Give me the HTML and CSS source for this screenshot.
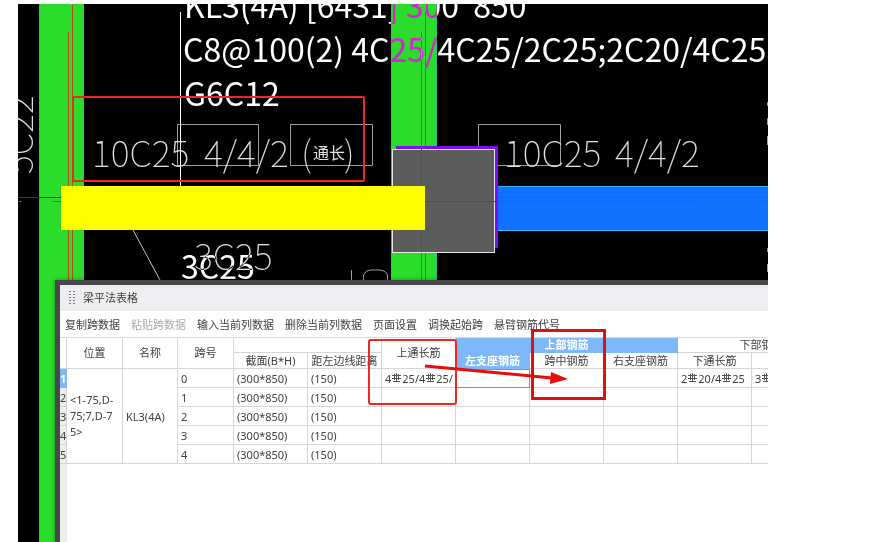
FILE: index.html
```html
<!DOCTYPE html>
<html lang="zh-CN">
<head>
    <meta charset="UTF-8">
    <meta name="viewport" content="width=device-width, initial-scale=1.0">
    <title>梁平法表格</title>
    <link rel="stylesheet" href="styles.css">
</head>
<body>
    <main class="viewport">
        <!-- Beam drawing -->
        <svg class="drawing" aria-label="KL3(4A)">
            <g transform="translate(-18 -4)">
                <!-- Vertical beams -->
                <rect class="beam-green" x="39" y="0" width="45" height="2000"/>
                <rect class="beam-green" x="392" y="0" width="44" height="2000"/>
                <path class="edge-cyan" d="M39.5 0V2000M83.5 0V2000M391.5 0V2000M436.5 0V2000"/>
                <path class="axis" d="M68.5 32V2000M72.5 4V2000M421.5 32V2000M425.5 4V2000"/>
                <path class="axis-green" d="M18 197.5H61"/>
                <path class="axis" d="M19 201.5H22M52 201.5H61"/>

                <!-- Label frames and leaders -->
                <path class="frame" d="M177.500 124.500H258.500V165.500H177.500ZM290.500 124.500H372.500V165.500H290.500ZM478.500 124.500H560.500V165.500H478.500Z"/>
                <path class="leader" d="M180.500 12V186"/>
                <path class="leader-thin" d="M133 230L160 280"/>

                <!-- Horizontal beams and column -->
                <rect class="beam-blue" x="498" y="186" width="2000" height="45"/>
                <path class="edge-light" d="M498 186.500H2500M498 230.500H2500"/>
                <path class="axis-blue" d="M498 197.500H2500M498 201.500H700M729 201.500H732M762 201.500H768"/>
                <rect class="column-shade" x="396" y="146" width="102" height="102"/>
                <rect class="column" x="392.5" y="149.5" width="102" height="103"/>
                <path class="axis-red" d="M421.500 146V252M425.500 146V149M425 201.500H495"/>
                <rect class="beam-yellow" x="61" y="186" width="364" height="44"/>

                <!-- Plotter labels -->
                <g class="plot">
                    <text x="92" y="167">10C25</text>
                    <text x="204" y="167">4/4/2</text>
                    <text x="301" y="167">(</text>
                    <text class="plot-small" x="313" y="159">通长</text>
                    <text x="344" y="167">)</text>
                    <text x="504" y="167">10C25</text>
                    <text x="615" y="167">4/4/2</text>
                    <text x="194" y="270">3C25</text>
                    <text transform="translate(33 174) rotate(-90)">5C22</text>
                </g>
                <path class="frame" d="M351.500 270V280M363.500 280V275Q366 270 370 270H380Q387 271 387.500 276V280"/>
                <path class="frame" d="M767.500 102V106M767.500 118V125M767.500 136V145M767.500 248V252M767.500 264V272"/>

                <!-- Beam notes -->
                <g class="note">
                    <text x="184" y="18">KL3(4A) [6431] 300  850</text>
                    <text x="183" y="62">C8@100(2) 4C25/4C25/2C25;2C20/4C25</text>
                    <text x="184" y="106">G6C12</text>
                    <text x="181" y="279">3C25</text>
                </g>
            </g>
        </svg>

        <!-- Table panel -->
        <section class="panel">
            <header class="panel-title">
                <svg class="grip" width="6" height="14" viewBox="0 0 6 14">
                    <path d="M1 0V14M5 0V14"/>
                </svg>
                <span>梁平法表格</span>
            </header>
            <div class="toolbar">
                <button type="button">复制跨数据</button>
                <button type="button" disabled>粘贴跨数据</button>
                <button type="button">输入当前列数据</button>
                <button type="button">删除当前列数据</button>
                <button type="button">页面设置</button>
                <button type="button">调换起始跨</button>
                <button type="button">悬臂钢筋代号</button>
            </div>
            <div class="sheet">
                <svg class="symbols">
                    <symbol id="rebar" viewBox="0 0 9 9">
                        <path d="M4.500 0V8.500M1 8.500H8M0 2.500H9M0 5.500H9M2.500 1V7M6.500 1V7"/>
                    </symbol>
                </svg>
                <table>
                    <colgroup>
                        <col class="c-num"><col class="c-info"><col class="c-span"><col class="c-info">
                        <col class="c-data"><col class="c-data"><col class="c-data"><col class="c-data">
                        <col class="c-data"><col class="c-data"><col class="c-data"><col class="c-wide">
                    </colgroup>
                    <thead>
                        <tr class="head-top">
                            <td rowspan="2"></td>
                            <th rowspan="2">位置</th>
                            <th rowspan="2">名称</th>
                            <th rowspan="2">跨号</th>
                            <th colspan="2"></th>
                            <th rowspan="2">上通长筋</th>
                            <th colspan="3" class="active">上部钢筋</th>
                            <th colspan="2">下部钢筋</th>
                        </tr>
                        <tr class="head-sub">
                            <th>截面(B*H)</th>
                            <th>距左边线距离</th>
                            <th class="active">左支座钢筋</th>
                            <th>跨中钢筋</th>
                            <th>右支座钢筋</th>
                            <th>下通长筋</th>
                            <th></th>
                        </tr>
                    </thead>
                    <tbody>
                        <tr>
                            <td class="num active">1</td>
                            <td rowspan="5" class="place">&lt;1-75,D-<br>75;7,D-7<br>5&gt;</td>
                            <td rowspan="5">KL3(4A)</td>
                            <td>0</td><td>(300*850)</td><td>(150)</td>
                            <td>4<svg class="rebar"><use href="#rebar"/></svg>25/4<svg class="rebar"><use href="#rebar"/></svg>25/</td>
                            <td class="selected"></td><td></td><td></td>
                            <td>2<svg class="rebar"><use href="#rebar"/></svg>20/4<svg class="rebar"><use href="#rebar"/></svg>25</td>
                            <td>3<svg class="rebar"><use href="#rebar"/></svg></td>
                        </tr>
                        <tr>
                            <td class="num">2</td>
                            <td>1</td><td>(300*850)</td><td>(150)</td>
                            <td></td><td></td><td></td><td></td><td></td><td></td>
                        </tr>
                        <tr>
                            <td class="num">3</td>
                            <td>2</td><td>(300*850)</td><td>(150)</td>
                            <td></td><td></td><td></td><td></td><td></td><td></td>
                        </tr>
                        <tr>
                            <td class="num">4</td>
                            <td>3</td><td>(300*850)</td><td>(150)</td>
                            <td></td><td></td><td></td><td></td><td></td><td></td>
                        </tr>
                        <tr>
                            <td class="num">5</td>
                            <td>4</td><td>(300*850)</td><td>(150)</td>
                            <td></td><td></td><td></td><td></td><td></td><td></td>
                        </tr>
                    </tbody>
                </table>
            </div>
        </section>

        <!-- Red markup over everything -->
        <svg class="markup">
            <g transform="translate(-18 -4)">
                <rect class="mark" x="73" y="97" width="291" height="84" rx="1"/>
                <rect class="mark" x="369" y="340" width="87" height="64" rx="2"/>
                <rect class="mark-strong" x="532.5" y="330.5" width="72" height="68"/>
                <path class="arrow-line" d="M425 366L552 378"/>
                <path class="arrow-head" d="M551 372L568 379L550 384Z"/>
            </g>
        </svg>
    </main>
</body>
</html>
```
FILE: styles.css
```css
body {
    margin: 0;
    background-color: #fff;
    font-family: "Noto Sans", "Noto Sans CJK SC", sans-serif;
}

.viewport {
    position: relative;
    display: flex;
    flex-direction: column;
    box-sizing: border-box;
    min-height: calc(100vh - 4px);
    margin: 4px 118px 0 18px;
    padding: 276px 0 0 37px;
    background-color: #000;
    overflow: hidden;
}

/* Drawing */
.drawing,
.markup {
    position: absolute;
    top: 0;
    left: 0;
    width: 100%;
    height: 100%;
    fill: none;
}

.markup {
    pointer-events: none;
}

.beam-green {
    fill: #2bdc2b;
}

.beam-blue {
    fill: #1070ff;
}

.beam-yellow {
    fill: #ffff00;
}

.column {
    fill: #5c5c5c;
    stroke: #e6e6e6;
}

.column-shade {
    fill: #7a0ff5;
}

.edge-cyan {
    stroke: #1fc08c;
}

.edge-light {
    stroke: #35b5f5;
}

.axis {
    stroke: #b84a14;
}

.axis-green {
    stroke: #0c5a10;
}

.axis-blue {
    stroke: #7a3fae;
}

.axis-red {
    stroke: #e0141c;
}

.frame {
    stroke: #a0a0a0;
}

.leader {
    stroke: #fff;
}

.leader-thin {
    stroke: #c8c8c8;
}

.plot {
    fill: #e0e0e0;
    font-family: "Noto Sans CJK SC", sans-serif;
    font-size: 36px;
    font-weight: 100;
}

.plot-small {
    font-size: 16px;
    font-weight: 400;
}

/* Notes invert whatever they cross */
.note {
    fill: #fff;
    font-family: "Noto Sans CJK SC", sans-serif;
    font-size: 32px;
    mix-blend-mode: difference;
}

.note text {
    white-space: pre;
}

/* Panel */
.panel {
    position: relative;
    display: flex;
    flex: 1;
    flex-direction: column;
    border-top: 5px solid #48484c;
    border-left: 5px solid #48484c;
    background-color: #fff;
    box-shadow: 0 0 4px rgba(0, 0, 0, 0.4);
    color: #404040;
    font-size: 11px;
    overflow: hidden;
}

.panel-title {
    display: flex;
    align-items: center;
    gap: 8px;
    height: 26px;
    padding: 0 9px;
    background-color: #eeeef0;
    line-height: 28px;
}

.grip path {
    fill: none;
    stroke: #77777c;
    stroke-width: 2;
    stroke-dasharray: 1 2;
}

.toolbar {
    display: flex;
    gap: 11px;
    height: 26px;
    padding: 0 5px;
}

.toolbar button {
    padding: 0;
    border: none;
    background: none;
    color: #404040;
    font-family: inherit;
    font-size: 11px;
    line-height: 28px;
    white-space: nowrap;
}

.toolbar button:disabled {
    color: #aaa;
}

.sheet {
    flex: 1;
    border-top: 1px solid #d8dadc;
    background: linear-gradient(to right, #eeeeef 7px, #fff 7px);
}

.symbols {
    position: absolute;
    width: 0;
    height: 0;
}

table {
    width: 786px;
    border-collapse: separate;
    border-spacing: 0;
    table-layout: fixed;
}

.c-num {
    width: 7px;
}

.c-info {
    width: 56px;
}

.c-span {
    width: 55px;
}

.c-data {
    width: 74px;
}

.c-wide {
    width: 94px;
}

th,
td {
    box-sizing: border-box;
    height: 19px;
    padding: 0 0 0 3px;
    border-right: 1px solid #d4d7da;
    border-bottom: 1px solid #d4d7da;
    background-color: #fff;
    line-height: 15px;
    text-align: left;
    white-space: nowrap;
    overflow: hidden;
}

th {
    padding: 0;
    font-weight: normal;
    text-align: center;
}

.head-top th {
    height: 15px;
    line-height: 14px;
}

.head-sub th {
    height: 16px;
}

th.active,
td.active {
    background-color: #7eb8fa;
    border-color: #7eb8fa;
    color: #fff;
    font-weight: bold;
}

td.num {
    padding: 0;
    background-color: #eeeeef;
}

td.num.active {
    background-color: #7eb8fa;
}

.place {
    line-height: 16px;
}

.selected {
    border: 1px solid #5b9be6;
}

.rebar {
    width: 9px;
    height: 9px;
    margin: 0 1px;
    fill: none;
    stroke: #555;
    vertical-align: 1px;
}

/* Markup */
.mark {
    stroke: #f2261c;
    stroke-width: 2;
}

.mark-strong {
    stroke: #e0100c;
    stroke-width: 3;
}

.arrow-line {
    stroke: #e80c0c;
    stroke-width: 3;
}

.arrow-head {
    fill: #e80c0c;
}
```
